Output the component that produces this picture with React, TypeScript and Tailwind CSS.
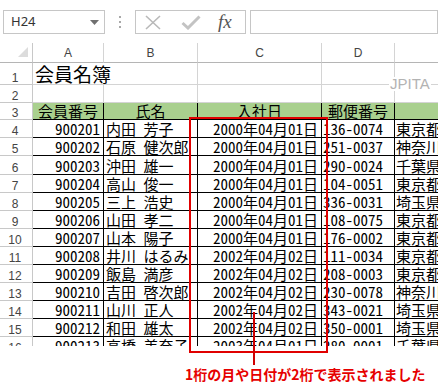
import React from "react";

const data: string[][] = [
  ["900201", "内田 芳子", "2000年04月01日", "136-0074", "東京都江東区"],
  ["900202", "石原 健次郎", "2000年04月01日", "251-0037", "神奈川県藤沢市"],
  ["900203", "沖田 雄一", "2000年04月01日", "290-0024", "千葉県市原市"],
  ["900204", "高山 俊一", "2000年04月01日", "104-0051", "東京都中央区"],
  ["900205", "三上 浩史", "2000年04月01日", "336-0031", "埼玉県さいたま市"],
  ["900206", "山田 孝二", "2000年04月01日", "108-0075", "東京都港区"],
  ["900207", "山本 陽子", "2000年04月01日", "176-0002", "東京都練馬区"],
  ["900208", "井川 はるみ", "2002年04月02日", "111-0034", "東京都台東区"],
  ["900209", "飯島 満彦", "2002年04月02日", "208-0003", "東京都武蔵村山市"],
  ["900210", "吉田 啓次郎", "2002年04月02日", "230-0078", "神奈川県横浜市"],
  ["900211", "山川 正人", "2002年04月02日", "343-0021", "埼玉県越谷市"],
  ["900212", "和田 雄太", "2002年04月02日", "350-0001", "埼玉県川越市"],
  ["900213", "高橋 美奈子", "2003年04月01日", "280-0001", "千葉県千葉市"],
];

const jp = "font-['Noto_Sans_CJK_JP',sans-serif] [font-feature-settings:'hwid']";
const hdr = "font-['Liberation_Sans',sans-serif] text-[12px] leading-[12px] text-[#444]";

function RowHead({ n, h }: { n: number; h: string }) {
  return (
    <div className={`w-[33px] shrink-0 ${h} border-r border-b border-[#c8c8c8] flex items-end justify-center pr-[2px] ${hdr}`}>
      {n}
    </div>
  );
}

export default function App() {
  return (
    <div className="relative w-[438px] h-[385px] overflow-hidden bg-white flex flex-col">
      {/* formula bar */}
      <div className="h-[43px] shrink-0 flex items-start pt-[10px]">
        <div className="ml-[3px] w-[102px] h-[24px] shrink-0 border border-[#c6c6c6] flex items-center pl-[7px] pr-[5px] text-[13px] text-[#333] font-['Noto_Sans',sans-serif]">
          <span className="flex-1">H24</span>
          <svg width="9" height="5" viewBox="0 0 9 5">
            <path d="M0 0H9L4.5 5Z" fill="#707070" />
          </svg>
        </div>
        <div className="w-[30px] h-[24px] shrink-0 flex flex-col items-center justify-center gap-[3px]">
          <div className="w-[2px] h-[2px] bg-[#a8a8a8]" />
          <div className="w-[2px] h-[2px] bg-[#a8a8a8]" />
          <div className="w-[2px] h-[2px] bg-[#a8a8a8]" />
        </div>
        <div className="w-[111px] h-[24px] shrink-0 border border-[#c6c6c6] flex items-center pl-[9px]">
          <svg width="16" height="15" viewBox="0 0 16 15">
            <path d="M1 1L15 14M15 1L1 14" stroke="#b9b9b9" strokeWidth="1.6" fill="none" />
          </svg>
          <svg className="ml-[20px]" width="20" height="15" viewBox="0 0 20 15">
            <path d="M1.5 8L7 13L18.5 1.5" stroke="#c3c3c3" strokeWidth="3" fill="none" />
          </svg>
          <span className="ml-[17px] font-['Liberation_Serif',serif] italic text-[19px] leading-[20px] text-[#555]">fx</span>
        </div>
        <div className="ml-[4px] flex-1 h-[24px] border border-[#c6c6c6]" />
      </div>

      {/* sheet */}
      <div className="h-[303px] shrink-0 overflow-hidden">
        {/* column headers */}
        <div className="flex h-[20px]">
          <div className="w-[33px] shrink-0 border-r border-b border-[#c8c8c8] border-b-[#b5b5b5] flex justify-end items-end pr-[4px] pb-[5px]">
            <svg width="10" height="10" viewBox="0 0 10 10">
              <path d="M10 0V10H0Z" fill="#dcdcdc" />
            </svg>
          </div>
          {[
            ["A", "w-[71px]"],
            ["B", "w-[94px]"],
            ["C", "w-[124px]"],
            ["D", "w-[73px]"],
            ["E", "w-[250px]"],
          ].map(([l, w]) => (
            <div key={l} className={`${w} shrink-0 border-r border-b border-[#d4d4d4] border-b-[#b5b5b5] flex items-center justify-center ${hdr}`}>
              {l}
            </div>
          ))}
        </div>

        {/* row 1 */}
        <div className="flex h-[22px]">
          <RowHead n={1} h="h-[22px]" />
          <div className={`w-[71px] shrink-0 border-b border-[#d4d4d4] flex items-end pl-[2px] text-[19px] leading-[21px] whitespace-nowrap text-black ${jp}`}>
            <span className="relative z-10">会員名簿</span>
          </div>
          <div className="w-[94px] shrink-0 border-r border-b border-[#d4d4d4]" />
          <div className="w-[124px] shrink-0 border-r border-b border-[#d4d4d4]" />
          <div className="w-[73px] shrink-0 border-r border-b border-[#d4d4d4]" />
          <div className="w-[250px] shrink-0 border-r border-b border-[#d4d4d4]" />
        </div>

        {/* row 2 */}
        <div className="flex h-[18px]">
          <RowHead n={2} h="h-[18px]" />
          <div className="w-[71px] shrink-0 border-r border-b border-[#d4d4d4]" />
          <div className="w-[94px] shrink-0 border-r border-b border-[#d4d4d4]" />
          <div className="w-[124px] shrink-0 border-r border-b border-[#d4d4d4]" />
          <div className="w-[73px] shrink-0 border-r border-b border-[#d4d4d4]" />
          <div className="w-[250px] shrink-0 border-r border-b border-[#d4d4d4]" />
        </div>

        {/* row 3 header */}
        <div className={`flex h-[17px] text-[15px] leading-[17px] text-black ${jp}`}>
          <RowHead n={3} h="h-[17px]" />
          <div className="w-[71px] shrink-0 bg-[#a9d08e] border-r border-b border-black flex items-end justify-center">会員番号</div>
          <div className="w-[94px] shrink-0 bg-[#a9d08e] border-r border-b border-black flex items-end justify-center">氏名</div>
          <div className="w-[124px] shrink-0 bg-[#a9d08e] border-r border-b border-black flex items-end justify-center">入社日</div>
          <div className="w-[73px] shrink-0 bg-[#a9d08e] border-r border-b border-black flex items-end justify-center">郵便番号</div>
          <div className="w-[250px] shrink-0 bg-[#a9d08e] border-r border-b border-black flex items-end justify-center">住所</div>
        </div>

        {data.map((r, i) => {
          const h = i === 2 ? "h-[19px]" : "h-[18px]";
          return (
            <div key={r[0]} className={`flex ${h} text-[15px] leading-[17px] text-black whitespace-nowrap ${jp}`}>
              <RowHead n={i + 4} h={h} />
              <div className="w-[71px] shrink-0 border-r border-b border-black flex items-end justify-end pr-[3px]">{r[0]}</div>
              <div className="w-[94px] shrink-0 border-r border-b border-black flex items-end pl-[2px] overflow-hidden">{r[1]}</div>
              <div className="w-[124px] shrink-0 border-r border-b border-black flex items-end justify-end pr-[3px]">{r[2]}</div>
              <div className="w-[73px] shrink-0 border-r border-b border-black flex items-end pl-[1px]">{r[3]}</div>
              <div className="w-[250px] shrink-0 border-r border-b border-black flex items-end pl-[1px]">{r[4]}</div>
            </div>
          );
        })}
      </div>

      {/* caption */}
      <div className="flex-1 pl-[185px] pt-[18px]">
        <p className="font-['Noto_Sans_CJK_JP',sans-serif] font-bold text-[14px] leading-[20px] text-[#e60000] whitespace-nowrap">
          1桁の月や日付が2桁で表示されました
        </p>
      </div>

      {/* watermark */}
      <div className="absolute left-[389px] top-[77px] bg-white px-[1px] font-['Liberation_Sans',sans-serif] text-[15px] leading-[14px] text-[#b3b3b3]">
        JPITA
      </div>

      {/* red highlight box and pointer */}
      <div className="absolute left-[189px] top-[117px] w-[139px] h-[236px] border-2 border-[#e00000]" />
      <div className="absolute left-[253px] top-[312px] w-[2px] h-[53px] bg-[#d00000]" />
    </div>
  );
}
